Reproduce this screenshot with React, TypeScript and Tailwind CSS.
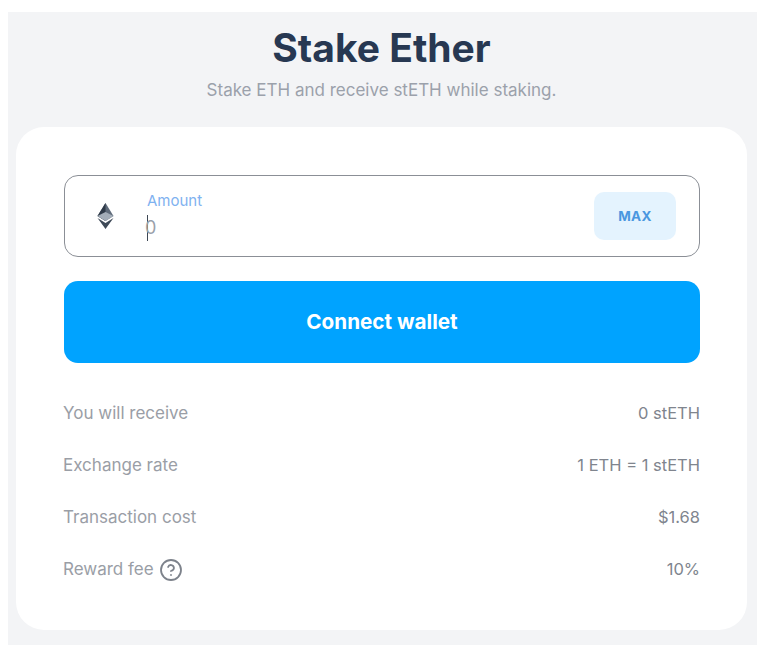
import React from 'react';
import { CircleHelp } from 'lucide-react';

const rows = [
  { label: 'You will receive', value: '0 stETH' },
  { label: 'Exchange rate', value: '1 ETH = 1 stETH' },
  { label: 'Transaction cost', value: '$1.68' },
  { label: 'Reward fee', value: '10%', help: true },
];

const EthIcon = () => (
  <svg width="17" height="26" viewBox="0 0 16 26" fill="none">
    <path d="M8 0 L16 13 L8 18 L0 13 Z" fill="#5f6b7a" />
    <path d="M8 0 L8 18 L0 13 Z" fill="#2f3a48" />
    <path d="M8 9 L16 13 L8 18 L0 13 Z" fill="#a3adb8" />
    <path d="M8 20 L16 15 L8 26 L0 15 Z" fill="#3e4957" />
  </svg>
);

const App = () => {
  return (
    <div className="h-[655px] w-[768px] bg-white pt-3 pl-2 font-['Inter',sans-serif]">
      <div className="h-[633px] w-[749px] bg-[#f3f4f6] pt-[14px] pl-2">
        <div className="w-[731px] text-center">
          <h1 className="text-[39px] leading-[44px] font-bold text-[#273852]">Stake Ether</h1>
          <p className="mt-[10px] text-[17px] leading-5 text-[#9ba1ab]">Stake ETH and receive stETH while staking.</p>
        </div>
        <div className="mt-[27px] h-[503px] w-[731px] rounded-[28px] bg-white pt-12 pr-[47px] pl-12">
          <div className="flex h-[82px] items-center rounded-[14px] border-[1.5px] border-[#8b8f96] pr-[23px] pl-8">
            <EthIcon />
            <div className="ml-[33px] flex flex-1 flex-col">
              <span className="text-[15px] leading-4 text-[#7fb2f0]">Amount</span>
              <span className="mt-[7px] flex h-6 items-center text-[18px] text-[#9ba1ab]">
                <span className="mr-[-3px] h-[26px] w-px bg-[#3d4754]" />
                <span>0</span>
              </span>
            </div>
            <button className="h-[48px] w-[82px] rounded-[10px] bg-[#e4f3fe] text-[13.5px] font-bold tracking-wide text-[#4a97e0]">MAX</button>
          </div>
          <button className="mt-6 h-[82px] w-full rounded-[14px] bg-[#00a3ff] text-[20.7px] font-bold text-white">Connect wallet</button>
          <div className="mt-[39px] flex flex-col gap-[29px]">
            {rows.map((row) => (
              <div key={row.label} className="flex h-[23px] items-center justify-between text-[17px] text-[#9a9ea6]">
                <span className="-ml-px flex items-center gap-[5px]">
                  {row.label}
                  {row.help && <CircleHelp className="h-[24px] w-[24px] text-[#7d828b]" strokeWidth={1.8} />}
                </span>
                <span className="text-[16.5px] text-[#80858e]">{row.value}</span>
              </div>
            ))}
          </div>
        </div>
      </div>
    </div>
  );
};

export default App;
